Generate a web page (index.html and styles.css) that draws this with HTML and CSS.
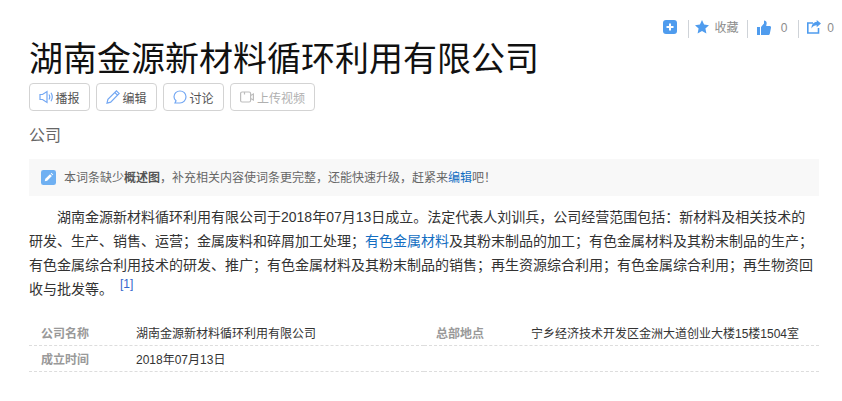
FILE: index.html
```html
<!DOCTYPE html>
<html lang="zh">
<head>
<meta charset="utf-8">
<title>湖南金源新材料循环利用有限公司</title>
<link rel="stylesheet" href="styles.css">
</head>
<body>
<div class="page">
  <div class="top-tools">
    <svg class="ic-top" viewBox="0 0 14 14"><rect width="14" height="14" rx="3" fill="#4f9cee"/><path d="M7 3.500v7M3.500 7h7" stroke="#fff" stroke-width="2"/></svg>
    <span class="sep sep-a"></span>
    <svg class="ic-top" viewBox="0 0 14 14"><path d="M7 0l2.100 4.600 4.900.6-3.600 3.300 1 4.900L7 11 2.600 13.400l1-4.900L0 5.200l4.900-.6z" fill="#4f9cee"/></svg>
    <span class="tool-text collect">收藏</span>
    <span class="sep sep-b"></span>
    <svg class="ic-top ic-like" viewBox="0 0 14 15"><path d="M0 7h3v8H0zM4 7l3-3.500V.5c1.500 0 2.700 1 2.700 2.700L9.200 6h3.300c1 0 1.700.8 1.500 1.700l-1.200 6c-.2.800-.8 1.300-1.600 1.300H4z" fill="#4f9cee"/></svg>
    <span class="tool-text count-like">0</span>
    <span class="sep sep-c"></span>
    <svg class="ic-top" viewBox="0 0 14 14"><path d="M11.500 8v5H.8V3H6" fill="none" stroke="#4f9cee" stroke-width="1.600"/><path d="M14 3.500L9.700 0v2C6.500 2 4.500 4.500 4.500 8.500c1.200-2.300 3-3.300 5.200-3.300v2z" fill="#4f9cee"/></svg>
    <span class="tool-text count-share">0</span>
  </div>
  <h1 class="title">湖南金源新材料循环利用有限公司</h1>
  <div class="actions">
    <a class="btn"><svg class="ic-btn" viewBox="0 0 14 14"><path d="M1 4.500h2.500L8 1.500v11l-4.500-3H1z" fill="none" stroke="#74a8f3" stroke-width="1.200"/><path d="M10 4.500c.9 1.500.9 3.500 0 5M12 2.800c1.600 2.600 1.600 5.800 0 8.400" fill="none" stroke="#74a8f3" stroke-width="1.200"/></svg>播报</a>
    <a class="btn"><svg class="ic-btn" viewBox="0 0 14 14"><path d="M10.500.8l2.700 2.700-8.500 8.700-3.700.9.900-3.700zM8.800 2.500l2.700 2.700" fill="none" stroke="#74a8f3" stroke-width="1.200"/></svg>编辑</a>
    <a class="btn"><svg class="ic-btn" viewBox="0 0 14 14"><path d="M7 1c3.400 0 6 2.500 6 5.700S10.400 13 7 13H2l1-2.200C1.800 9.700 1 8.300 1 6.700 1 3.500 3.600 1 7 1z" fill="none" stroke="#74a8f3" stroke-width="1.200"/></svg>讨论</a>
    <a class="btn btn-off"><svg class="ic-btn" viewBox="0 0 14 14"><rect x=".6" y="2" width="10" height="10" rx="1.500" fill="none" stroke="#bdbdbd" stroke-width="1.200"/><path d="M10.600 5.500l2.800-1.500v6l-2.800-1.500M4.500 2v2.500" fill="none" stroke="#bdbdbd" stroke-width="1.200"/></svg>上传视频</a>
  </div>
  <div class="subtitle">公司</div>
  <div class="notice">
    <svg class="notice-ic" viewBox="0 0 16 16"><rect width="16" height="16" rx="2.500" fill="#6fb0f2"/><path d="M4 12l.6-2.600 5-5 2 2-5 5zM10.400 3.700l.7-.7 2 2-.7.700z" fill="#fff"/></svg>
    <span class="notice-text">本词条缺少<b>概述图</b>，补充相关内容使词条更完整，还能快速升级，赶紧来<a class="link">编辑</a>吧！</span>
  </div>
  <p class="para">湖南金源新材料循环利用有限公司于2018年07月13日成立。法定代表人刘训兵，公司经营范围包括：新材料及相关技术的研发、生产、销售、运营；金属废料和碎屑加工处理；<a class="link">有色金属材料</a>及其粉末制品的加工；有色金属材料及其粉末制品的生产；有色金属综合利用技术的研发、推广；有色金属材料及其粉末制品的销售；再生资源综合利用；有色金属综合利用；再生物资回收与批发等。<sup class="ref">[1]</sup></p>
  <div class="info">
    <div class="row"><span class="key">公司名称</span><span class="val">湖南金源新材料循环利用有限公司</span></div>
    <div class="row"><span class="key">总部地点</span><span class="val">宁乡经济技术开发区金洲大道创业大楼15楼1504室</span></div>
    <div class="row"><span class="key">成立时间</span><span class="val">2018年07月13日</span></div>
    <div class="row"></div>
  </div>
</div>
</body>
</html>
```

FILE: styles.css
```css
html, body { margin: 0; padding: 0; background: #fff; }
body { font-family: "Liberation Sans", "Noto Sans CJK SC", sans-serif; color: #333; font-size: 12px; overflow: hidden; }
.page { width: 790px; margin-left: 29px; height: 401px; }
.top-tools { display: flex; align-items: flex-start; justify-content: flex-end; height: 18px; padding-top: 20px; margin-right: -15px; color: #999; }
.ic-top { width: 14px; height: 14px; flex: none; }
.ic-like { height: 15px; }
.sep { width: 1px; height: 18px; background: #cfd3d8; flex: none; }
.sep-a { margin: 0 6px 0 11px; }
.sep-b { margin: 0 9px 0 8px; }
.sep-c { margin: 0 8px 0 11px; }
.tool-text { font-size: 12px; line-height: 16px; color: #8c8c8c; margin-left: 6px; }
.count-like { margin-left: 10px; }
.title { margin: 0; font-size: 34px; font-weight: 400; line-height: 42px; color: #111; height: 45px; }
.actions { display: flex; gap: 6px; }
.btn { display: flex; align-items: center; justify-content: center; gap: 2px; box-sizing: border-box; width: 61px; height: 28px; border: 1px solid #d3d3d3; border-radius: 4px; font-size: 12px; color: #555; }
.btn-off { width: 85px; gap: 3px; color: #b0b0b0; }
.ic-btn { width: 14px; height: 14px; flex: none; }
.subtitle { margin-top: 14px; font-size: 16px; line-height: 22px; color: #666; }
.notice { display: flex; align-items: center; margin-top: 12px; height: 37px; background: #f8f8f8; padding-left: 12px; color: #666; font-size: 12px; }
.notice-ic { width: 15px; height: 15px; margin-right: 8px; flex: none; }
.notice-text { margin-bottom: 2px; }
.notice b { font-weight: 700; color: #555; }
.link { color: #136ec2; }
.para { margin: 9px 0 0; font-size: 14px; line-height: 24px; text-indent: 28px; color: #333; }
.ref { font-size: 12px; color: #3366cc; line-height: 0; vertical-align: 6px; margin-left: 7px; }
.info { display: grid; grid-template-columns: 395px 395px; margin-top: 19px; }
.row { display: flex; height: 25px; line-height: 29px; border-bottom: 1px dashed #ddd; font-size: 12px; }
.key { width: 107px; padding-left: 12px; box-sizing: border-box; font-weight: 700; color: #999; flex: none; }
.val { color: #333; white-space: nowrap; }
```
